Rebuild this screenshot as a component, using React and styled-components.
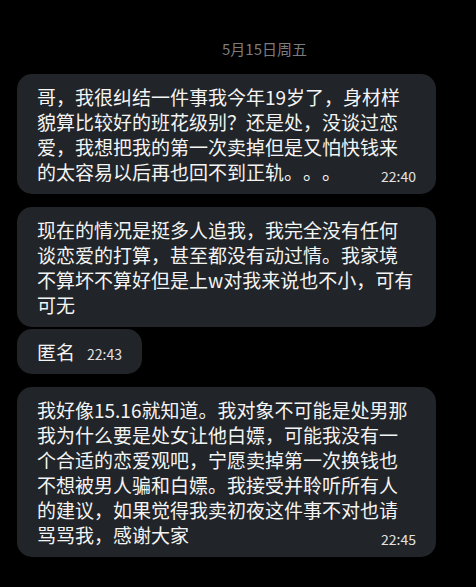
import React from 'react'
import styled, { createGlobalStyle } from 'styled-components'

const GlobalStyle = createGlobalStyle`
	body {
		margin: 0;
		padding: 0;
		background: #000;
		font-family: 'Noto Sans CJK SC', 'Noto Sans', sans-serif;
	}
`

const Screen = styled.div`
	width: 476px;
	min-height: 587px;
	background: #000;
	padding-top: 38px;
	box-sizing: border-box;
`

const DateLabel = styled.div`
	margin-left: 222px;
	font-size: 15px;
	line-height: 22px;
	color: #7c7c7c;
	margin-bottom: 14px;
`

const List = styled.div`
	display: flex;
	flex-direction: column;
	align-items: flex-start;
	padding-left: 17px;
`

const Bubble = styled.div`
	max-width: 419px;
	box-sizing: border-box;
	background: #212428;
	border-radius: 15px;
	padding: 10px 20px;
	color: #f4f4f4;
	font-size: 19px;
	line-height: 25px;
	text-spacing-trim: space-all;
	margin-top: ${props => props.$grouped ? '2px' : '13px'};
	&:first-child {
		margin-top: 0;
	}
`

const Time = styled.span`
	font-size: 14px;
	color: #e2e2e2;
	${props => props.$inline
		? 'margin-left: 12px; line-height: 1;'
		: 'float: right; line-height: 25px; margin: 5px 0 -5px 0;'}
`

const messages = [
	{
		text: '哥，我很纠结一件事我今年19岁了，身材样貌算比较好的班花级别？还是处，没谈过恋爱，我想把我的第一次卖掉但是又怕快钱来的太容易以后再也回不到正轨。。。',
		time: '22:40',
	},
	{
		text: '现在的情况是挺多人追我，我完全没有任何谈恋爱的打算，甚至都没有动过情。我家境不算坏不算好但是上w对我来说也不小，可有可无',
	},
	{ text: '匿名', time: '22:43', inline: true, grouped: true },
	{
		text: '我好像15.16就知道。我对象不可能是处男那我为什么要是处女让他白嫖，可能我没有一个合适的恋爱观吧，宁愿卖掉第一次换钱也不想被男人骗和白嫖。我接受并聆听所有人的建议，如果觉得我卖初夜这件事不对也请骂骂我，感谢大家',
		time: '22:45',
	},
]

const App = () => {
	return (
		<>
			<GlobalStyle />
			<Screen>
				<DateLabel>5月15日周五</DateLabel>
				<List>
					{messages.map((m, i) => (
						<Bubble key={i} $grouped={m.grouped}>
							{m.text}
							{m.time && <Time $inline={m.inline}>{m.time}</Time>}
						</Bubble>
					))}
				</List>
			</Screen>
		</>
	)
}

export default App
